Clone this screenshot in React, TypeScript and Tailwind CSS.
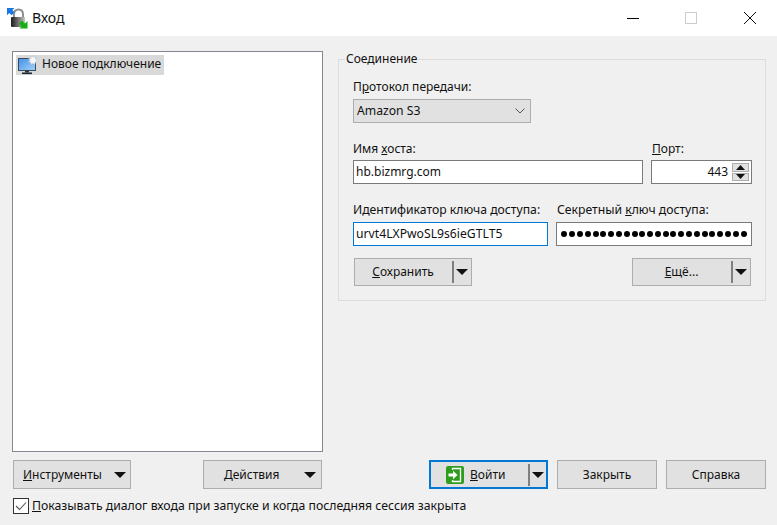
const font = "[font-family:'Noto_Sans',sans-serif]";

function Tri() {
  return (
    <svg width="12" height="6" viewBox="0 0 12 6" className="shrink-0">
      <path d="M0 0H12L6 6Z" fill="#111" />
    </svg>
  );
}

function LockIcon() {
  return (
    <svg width="21" height="21" viewBox="0 0 21 21" className="shrink-0">
      <defs>
        <linearGradient id="lk" x1="0" x2="1" y1="0" y2="0">
          <stop offset="0" stopColor="#1c1c1c" />
          <stop offset="0.55" stopColor="#777" />
          <stop offset="1" stopColor="#c4c4c4" />
        </linearGradient>
      </defs>
      <path d="M7 10V6.5C7 3 9 1.5 11.5 1.5S16 3 16 6.5V10" fill="none" stroke="#8f8f8f" strokeWidth="2" />
      <rect x="4" y="9" width="14" height="10" rx="1" fill="url(#lk)" />
      <path d="M0 0H7.5L5.4 2.1L7.5 4.4L4.6 7.3L2.2 5L0 7.3Z" fill="#1877e6" />
      <path d="M20.5 20.5H12.5L14.7 18.3L12 15.5L15 12.5L18 15.4L20.5 13Z" fill="#12b012" />
    </svg>
  );
}

function MonitorIcon() {
  return (
    <svg width="20" height="20" viewBox="0 0 20 20" className="shrink-0">
      <defs>
        <linearGradient id="sc" x1="0" x2="1" y1="0" y2="1">
          <stop offset="0" stopColor="#3f90ea" />
          <stop offset="1" stopColor="#a6d2f7" />
        </linearGradient>
      </defs>
      <rect x="0.5" y="3.5" width="17" height="12" fill="url(#sc)" stroke="#3a4a5a" />
      <rect x="7" y="15.5" width="4" height="2" fill="#2a3440" />
      <rect x="4" y="17.5" width="10" height="1.6" fill="#1d2630" />
      <path d="M14 0L15 2L17 1L17.2 3.2L19.6 3.6L18 5.2L19.6 7L17.2 7.3L17 9.6L15 8.4L13 9.6L12.8 7.3L10.6 7L12 5.2L10.6 3.6L12.8 3.2L13 1L14 2Z" fill="#f4f6f8" stroke="#b9c2cc" strokeWidth="0.6" />
    </svg>
  );
}

function LoginIcon() {
  return (
    <svg width="18" height="18" viewBox="0 0 18 18" className="shrink-0">
      <rect x="0" y="0" width="18" height="18" rx="2" fill="#2f9e1f" />
      <path d="M6.5 4V2.5H14.5V15.5H6.5V14" fill="none" stroke="#fff" strokeWidth="1.3" />
      <path d="M2.5 7.5H7V4.8L11.5 9L7 13.2V10.5H2.5Z" fill="#fff" />
    </svg>
  );
}

function Btn({ className = "", children }: { className?: string; children: React.ReactNode }) {
  return (
    <div className={`h-[29px] flex items-center shrink-0 border border-[#adadad] bg-[#e1e1e1] ${className}`}>
      {children}
    </div>
  );
}

function SplitBtn({ w, label }: { w: string; label: React.ReactNode }) {
  return (
    <div className={`h-[28px] flex items-center shrink-0 border border-[#adadad] bg-[#e1e1e1] ${w}`}>
      <div className="flex-1 text-center pr-px">{label}</div>
      <div className="w-0.5 h-[22px] bg-[#7f7f7f] shrink-0" />
      <div className="w-[17px] flex justify-center shrink-0 pr-px">
        <Tri />
      </div>
    </div>
  );
}

function Field({ className = "", children }: { className?: string; children: React.ReactNode }) {
  return (
    <div className={`h-6 flex items-center shrink-0 bg-white border px-0.5 whitespace-nowrap ${className}`}>
      {children}
    </div>
  );
}

export default function App() {
  return (
    <div className={`w-[777px] h-[525px] flex flex-col bg-[#f0f0f0] text-[#111] text-[12px] leading-4 overflow-hidden ${font}`}>
      <div className="h-9 bg-white flex items-center shrink-0 pl-[7px]">
        <LockIcon />
        <span className="ml-[4px] text-[14px] leading-5">Вход</span>
        <div className="ml-auto flex items-center">
          <div className="w-3 h-px bg-black mr-[46px]" />
          <div className="w-3 h-3 border border-[#ccc] mr-[46px]" />
          <svg width="14" height="14" viewBox="0 0 14 14" className="mr-[20px]">
            <path d="M1 1L13 13M13 1L1 13" stroke="#111" strokeWidth="1" />
          </svg>
        </div>
      </div>

      <div className="flex pl-3 pt-[15px] h-[416px] shrink-0 items-start">
        <div className="w-[311px] h-[401px] shrink-0 bg-white border border-[#828790] p-[3px] pr-0">
          <div className="w-[148px] h-[20px] bg-[#d9d9d9] flex items-center pl-[2px]">
            <MonitorIcon />
            <span className="ml-[4px] whitespace-nowrap mt-[-2px]">Новое подключение</span>
          </div>
        </div>

        <fieldset className="ml-[15px] w-[428px] h-[250px] border border-[#dcdcdc] pl-[14px] pr-[13px] shrink-0">
          <legend className="ml-[-8px] px-px leading-4 text-[12px]">Соединение</legend>
          <div className="mt-[12px] h-4 leading-4">
            П<u>р</u>отокол передачи:
          </div>
          <div className="mt-[4px] w-[178px] h-6 flex items-center justify-between border border-[#adadad] bg-[#e1e1e1] pl-[3px] pr-[5px]">
            <span className="text-[12.2px]">Amazon S3</span>
            <svg width="10" height="6" viewBox="0 0 10 6">
              <path d="M0.5 0.5L5 5L9.5 0.5" fill="none" stroke="#555" />
            </svg>
          </div>

          <div className="flex mt-[18px] gap-2">
            <div className="w-[290px] shrink-0">
              <div className="h-4 mb-[3px]">
                Имя <u>х</u>оста:
              </div>
              <Field className="w-[290px] border-[#7a7a7a]">hb.bizmrg.com</Field>
            </div>
            <div className="w-[101px] shrink-0">
              <div className="h-4 mb-[3px] pl-px">
                <u>П</u>орт:
              </div>
              <Field className="w-[101px] justify-end pr-0 border-[#7a7a7a]">
                <span className="mr-[4px]">443</span>
                <div className="w-[17px] h-[18px] flex flex-col gap-px shrink-0 mr-[2px]">
                  <div className="flex-1 bg-[#e1e1e1] border border-[#adadad] flex items-center justify-center">
                    <svg width="9" height="5" viewBox="0 0 9 5"><path d="M4.5 0L9 5H0Z" fill="#111" /></svg>
                  </div>
                  <div className="flex-1 bg-[#e1e1e1] border border-[#adadad] flex items-center justify-center">
                    <svg width="9" height="5" viewBox="0 0 9 5"><path d="M0 0H9L4.5 5Z" fill="#111" /></svg>
                  </div>
                </div>
              </Field>
            </div>
          </div>

          <div className="flex mt-[18px] gap-2">
            <div className="w-[195px] shrink-0">
              <div className="h-4 mb-[4px] whitespace-nowrap text-[12.2px]">Идентификатор ключа доступа:</div>
              <Field className="w-[195px] border-[#0078d7]"><span className="text-[12.2px]">urvt4LXPwoSL9s6ieGTLT5</span></Field>
            </div>
            <div className="w-[196px] shrink-0">
              <div className="h-4 mb-[4px] pl-px whitespace-nowrap text-[12.2px]">
                Секретный <u>к</u>люч доступа:
              </div>
              <Field className="w-[196px] justify-center px-0 gap-[1.8px] border-[#7a7a7a]">
                {Array.from({ length: 24 }).map((_, i) => (
                  <span key={i} className="w-[6px] h-[6px] rounded-full bg-black shrink-0" />
                ))}
              </Field>
            </div>
          </div>

          <div className="flex justify-between mt-[12px] pl-px pr-px">
            <SplitBtn w="w-[118px]" label={<span><u>С</u>охранить</span>} />
            <SplitBtn w="w-[119px]" label={<span><u>Е</u>щё...</span>} />
          </div>
        </fieldset>
      </div>

      <div className="flex items-center pl-[13px] mt-[8px] shrink-0">
        <Btn className="w-[118px] pl-[9px] pr-[4px] justify-between">
          <span><u>И</u>нструменты</span>
          <Tri />
        </Btn>
        <Btn className="w-[119px] ml-[72px] pr-[5px] pl-[20px] justify-between">
          <span><u>Д</u>ействия</span>
          <Tri />
        </Btn>
        <div className="w-[119px] h-[29px] ml-[107px] shrink-0 flex items-center border-2 border-[#0078d7] bg-[#e1e1e1]">
          <div className="flex-1 flex items-center pl-[15px]">
            <LoginIcon />
            <span className="ml-[6px]"><u>В</u>ойти</span>
          </div>
          <div className="w-0.5 h-[22px] bg-[#7f7f7f] shrink-0" />
          <div className="w-[16px] flex justify-center shrink-0 pr-px">
            <Tri />
          </div>
        </div>
        <Btn className="w-[100px] ml-[9px] justify-center">Закрыть</Btn>
        <Btn className="w-[100px] ml-[9px] justify-center">Справка</Btn>
      </div>

      <div className="flex items-center pl-[13px] mt-[9px] shrink-0">
        <div className="w-4 h-4 border border-[#333] bg-white flex items-center justify-center shrink-0">
          <svg width="12" height="10" viewBox="0 0 12 10">
            <path d="M1 5L4.5 8.5L11 1.5" fill="none" stroke="#555" strokeWidth="1.1" />
          </svg>
        </div>
        <span className="ml-[3px] whitespace-nowrap text-[12.25px]">
          <u>П</u>оказывать диалог входа при запуске и когда последняя сессия закрыта
        </span>
      </div>
    </div>
  );
}
